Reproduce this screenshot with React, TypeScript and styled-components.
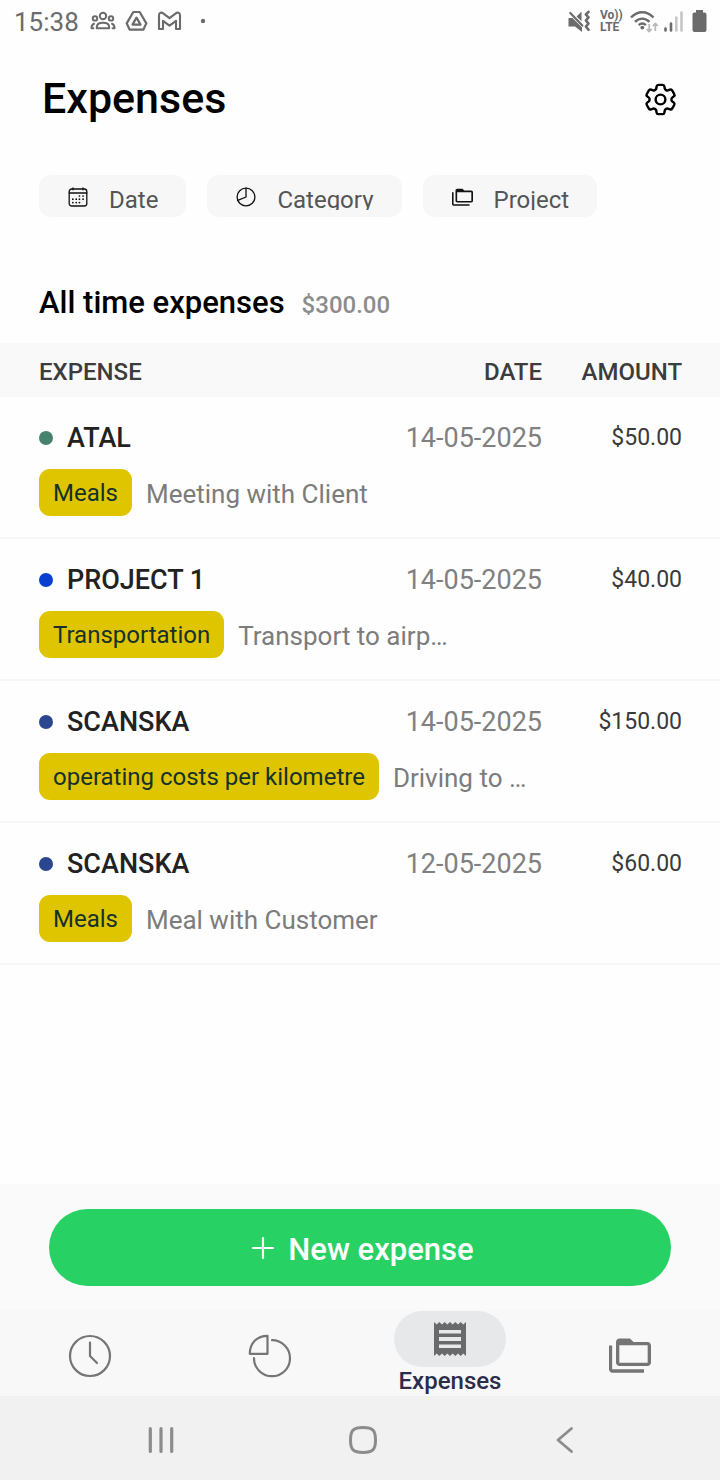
import React from "react";
import styled, { createGlobalStyle } from "styled-components";
import { HiOutlineCog6Tooth } from "react-icons/hi2";

const GlobalStyle = createGlobalStyle`
  *, *::before, *::after { box-sizing: border-box; }
  body {
    margin: 0;
    background: #fefefe;
    color: #000;
    font-family: Roboto, "Liberation Sans", sans-serif;
  }
  button { font: inherit; border: 0; cursor: pointer; }
  svg { display: block; flex: none; }
`;

const Screen = styled.div`
  display: flex;
  flex-direction: column;
  min-height: 100vh;
`;

const StatusBar = styled.div`
  display: flex;
  justify-content: space-between;
  align-items: center;
  height: 44px;
  padding: 0 13px 2px 14px;
  color: #6b6b6b;
`;

const StatusGroup = styled.div<{ $gap: number }>`
  display: flex;
  align-items: center;
  gap: ${(p) => p.$gap}px;
`;

const Clock = styled.time`
  padding: 2px 2px 0 0;
  font-size: 26px;
  line-height: 32px;
`;

const Volte = styled.span`
  display: flex;
  flex-direction: column;
  width: 21px;
  font-size: 12px;
  line-height: 12px;
  font-weight: 700;
  white-space: nowrap;
`;

const Header = styled.header`
  display: flex;
  justify-content: space-between;
  align-items: center;
  height: 110px;
  padding: 0 40px 0 42px;
`;

const Title = styled.h1`
  margin: 0;
  padding-bottom: 2px;
  font-size: 43px;
  line-height: 50px;
  font-weight: 500;
`;

const IconButton = styled.button`
  display: flex;
  padding: 0;
  background: none;
  color: inherit;
`;

const Filters = styled.div`
  display: flex;
  gap: 21px;
  padding: 21px 39px 0;
`;

const Chip = styled.button`
  display: flex;
  align-items: center;
  gap: 21px;
  height: 42px;
  padding: 2px 28px 0 29px;
  border-radius: 12px;
  background: #f7f7f7;
  color: #555;
`;

const ChipLabel = styled.span`
  height: 26px;
  overflow: hidden;
  font-size: 24px;
  line-height: 32px;
`;

const Summary = styled.div`
  display: flex;
  align-items: baseline;
  gap: 17px;
  padding: 66px 39px 20px;
`;

const SummaryTitle = styled.h2`
  margin: 0;
  font-size: 31px;
  line-height: 40px;
  font-weight: 500;
`;

const SummaryTotal = styled.span`
  font-size: 24px;
  font-weight: 500;
  color: #8c8c8c;
`;

const Table = styled.table`
  width: 100%;
  border-collapse: collapse;
  text-align: right;
`;

const HeadCell = styled.th<{ $align?: string }>`
  height: 54px;
  padding: 4px 0 0;
  background: #f9f9f9;
  color: #3c3c3c;
  font-size: 24px;
  line-height: 28px;
  font-weight: 500;
  text-align: ${(p) => p.$align ?? "right"};
  &:first-child { padding-left: 39px; }
  &:last-child { width: 178px; padding-right: 38px; }
`;

const Cell = styled.td`
  padding: 24px 0 0;
  line-height: 34px;
`;

const NameCell = styled(Cell)`
  padding-left: 39px;
  text-align: left;
`;

const Name = styled.span`
  display: flex;
  align-items: center;
  gap: 14px;
  font-size: 27px;
  font-weight: 500;
  color: #222;
`;

const Dot = styled.i<{ $color: string }>`
  width: 14px;
  height: 14px;
  border-radius: 50%;
  background: ${(p) => p.$color};
`;

const DateCell = styled(Cell)`
  font-size: 27px;
  color: #808080;
`;

const AmountCell = styled(Cell)`
  padding-right: 38px;
  font-size: 23px;
  color: #3a3a3a;
`;

const DetailCell = styled.td`
  padding: 14px 39px 21px;
  border-bottom: 2px solid #f7f7f7;
`;

const Detail = styled.div`
  display: flex;
  align-items: center;
  gap: 14px;
`;

const Tag = styled.span`
  padding: 2px 14px 0;
  border-radius: 11px;
  background: #dfc500;
  color: #16302b;
  font-size: 24px;
  line-height: 45px;
`;

const Note = styled.span`
  padding-top: 2px;
  font-size: 26px;
  line-height: 34px;
  color: #7c7c7c;
`;

const Main = styled.main`
  flex: 1;
`;

const ActionBar = styled.div`
  padding: 25px 49px 24px;
  background: #fafafa;
`;

const NewButton = styled.button`
  display: flex;
  align-items: center;
  justify-content: center;
  gap: 13px;
  width: 100%;
  height: 77px;
  padding: 0 0 0 5px;
  border-radius: 39px;
  background: #28d163;
  color: #fff;
  font-size: 31px;
  font-weight: 500;
`;

const NewLabel = styled.span`
  padding-top: 4px;
`;

const TabBar = styled.nav`
  display: grid;
  grid-template-columns: repeat(4, 1fr);
  height: 86px;
  background: #f8f8f8;
`;

const Tab = styled.a<{ $active?: boolean }>`
  display: flex;
  flex-direction: column;
  align-items: center;
  justify-content: ${(p) => (p.$active ? "flex-start" : "center")};
  padding-top: ${(p) => (p.$active ? 1 : 5)}px;
  color: ${(p) => (p.$active ? "#2b2d4a" : "#757575")};
  font-size: 24px;
  line-height: 28px;
  font-weight: 500;
  text-decoration: none;
`;

const Pill = styled.span`
  display: flex;
  align-items: center;
  justify-content: center;
  width: 112px;
  height: 56px;
  border-radius: 28px;
  background: #e7e8ea;
  color: #696a6c;
`;

const SystemBar = styled.div`
  display: flex;
  justify-content: space-around;
  align-items: center;
  height: 84px;
  padding: 4px 55px 0 60px;
  background: #f1f1f1;
  color: #8c8c8c;
`;

const line = {
  fill: "none",
  stroke: "currentColor",
  strokeLinecap: "round" as const,
  strokeLinejoin: "round" as const,
};

const PeopleIcon = () => (
  <svg width="26" height="20" viewBox="0 0 26 20" {...line} strokeWidth="2">
    <circle cx="13" cy="5" r="3.2" />
    <circle cx="5" cy="7.400" r="2.200" />
    <circle cx="21" cy="7.400" r="2.200" />
    <path d="M6.800 17.200v-1c0-2.800 2.600-4.400 6.200-4.400s6.200 1.600 6.200 4.400v1z" />
    <path d="M4 12.800C2.300 13.400 1.500 14.700 1.500 17.200H3.400M22 12.800c1.700.6 2.500 1.900 2.500 4.400h-1.900" />
  </svg>
);

const DriveIcon = () => (
  <svg width="23" height="22" viewBox="0 0 23 22" {...line} strokeWidth="2.200">
    <path d="M8.300 2h6.400l6.600 11.400-3 6.300H4.700l-3-6.300z" />
    <path d="M11.500 7.600l4 7H7.500z" />
  </svg>
);

const MailIcon = () => (
  <svg width="25" height="20" viewBox="0 0 25 20" {...line} strokeWidth="2.100">
    <path d="M2 4C2 1.600 4.500 1 6.200 2.300l6.300 4.900 6.300-4.900C20.500 1 23 1.600 23 4v14h-4V9.800l-6.500 4.800L6 9.800V18H2z" />
  </svg>
);

const MuteIcon = () => (
  <svg width="23" height="23" viewBox="0 0 23 23" {...line}>
    <path d="M.500 8h4l9.500 9.500V22L7 16.500H.500zM8.600 6.400l4.900-5v9.800z" fill="currentColor" stroke="none" />
    <path d="M2.300 3l12 12.600" strokeWidth="2.200" />
    <path d="M20.500 1.800l-2.600 2.700 2.600 2.900-2.600 3.100 2.600 3.100-2.600 2.900 2.600 3.200" strokeWidth="2.600" />
  </svg>
);

const WifiIcon = () => (
  <svg width="29" height="23" viewBox="0 0 29 23" {...line} strokeLinecap="butt">
    <path d="M1 7.500c6.500-7 16-7 22.500 0M5 11.800c4.300-4.300 10.200-4.300 14.500 0M8.700 15.200c2.200-2 5-2 7.200 0" strokeWidth="2.400" />
    <circle cx="12.300" cy="17.600" r="1.900" fill="currentColor" stroke="none" />
    <path d="M19.200 14v7.500M16.800 19l2.400 2.600 2.400-2.600M25.300 21v-7.500M22.900 16l2.400-2.600 2.400 2.600" stroke="#b9b9b9" strokeWidth="1.800" />
  </svg>
);

const SignalIcon = () => (
  <svg width="20" height="23" viewBox="0 0 20 23" {...line} strokeWidth="2.600">
    <path d="M2.500 18.500v2M8 13.500v7" />
    <path d="M13.300 7.500v13M18.500 2.500v18" stroke="#c6c6c6" />
  </svg>
);

const BatteryIcon = () => (
  <svg width="15" height="22" viewBox="0 0 15 22" fill="currentColor">
    <path d="M4 0h7v2.500h1.500Q14.500 2.500 14.500 4.500V20q0 2-2 2h-10q-2 0-2-2V4.500q0-2 2-2H4z" />
  </svg>
);

const CalendarIcon = () => (
  <svg width="20" height="20" viewBox="0 0 20 20" {...line} stroke="#111" strokeWidth="1.300">
    <rect x="1.200" y="2" width="17.600" height="17" rx="2.500" />
    <path d="M1.200 6h17.600M5 .8v2M15 .8v2" />
    <path d="M11.400 9h.1M15 9h.1M4.800 12.200h.1M8.200 12.200h.1M11.400 12.200h.1M15 12.200h.1M4.800 15.600h.1M8.200 15.600h.1M11.400 15.600h.1" strokeWidth="1.700" />
  </svg>
);

const CategoryIcon = () => (
  <svg width="20" height="20" viewBox="0 0 20 20" {...line} stroke="#111" strokeWidth="1.300">
    <circle cx="10" cy="10" r="8.900" />
    <path d="M10 1.100V10L1.800 13.400" />
  </svg>
);

const FoldersIcon = ({ size, color }: { size: number; color?: string }) => (
  <svg width={size} height={size} viewBox="0 0 24 24" fill={color ?? "currentColor"}>
    <path d="M1.800 6H0v13.500c0 1.100.9 2 2 2h18v-1.900H1.800zM22 4h-8l-2-2H6c-1.100 0-2 .9-2 2v11.700c0 1.100.9 2 2 2h16c1.100 0 2-.9 2-2V6c0-1.100-.9-2-2-2zm.1 11.900H5.900V5.900h16.200z" />
  </svg>
);

const PlusIcon = () => (
  <svg width="24" height="24" viewBox="0 0 24 24" {...line} strokeWidth="2.200">
    <path d="M12 2v20M2 12h20" />
  </svg>
);

const TimeTabIcon = () => (
  <svg width="44" height="44" viewBox="0 0 44 44" {...line} strokeWidth="2.200">
    <circle cx="22" cy="22" r="20" />
    <path d="M22 8.500V22l7 7" />
  </svg>
);

const StatsTabIcon = () => (
  <svg width="44" height="44" viewBox="0 0 44 44" {...line} strokeWidth="2.200">
    <path d="M19.500 1.800v18H1.800C1.800 9 9 1.800 19.500 1.800z" />
    <path d="M24 6.200A18 18 0 1 1 6 24.200" />
  </svg>
);

const ReceiptIcon = () => (
  <svg width="32" height="36" viewBox="0 0 32 36">
    <path
      fill="currentColor"
      fillRule="evenodd"
      d="M0 1l2.700 2.400L5.300 1 8 3.400 10.700 1l2.600 2.400L16 1l2.700 2.400L21.300 1 24 3.400 26.700 1l2.600 2.400L32 1v34l-2.700-2.400-2.600 2.400L24 32.600 21.300 35l-2.600-2.400L16 35l-2.700-2.400-2.600 2.400L8 32.600 5.300 35l-2.600-2.400L0 35zM5 9v3.500h22V9zM5 16v4h22v-4zM5 23.500V27h22v-3.500z"
    />
  </svg>
);

const RecentsIcon = () => (
  <svg width="28" height="28" viewBox="0 0 28 28" {...line} strokeWidth="3.200">
    <path d="M3.300 2.500v23M14 2.500v23M24.700 2.500v23" />
  </svg>
);

const HomeIcon = () => (
  <svg width="30" height="30" viewBox="0 0 30 30" {...line} strokeWidth="3">
    <path d="M15 2.500c9.800 0 12.500 2.700 12.500 12.500S24.800 27.500 15 27.500 2.500 24.800 2.500 15 5.200 2.500 15 2.500z" />
  </svg>
);

const BackIcon = () => (
  <svg width="28" height="28" viewBox="0 0 28 28" {...line} strokeWidth="2.800">
    <path d="M20.500 2.500L7 14l13.500 11.500" />
  </svg>
);

const filters = [
  { label: "Date", icon: <CalendarIcon /> },
  { label: "Category", icon: <CategoryIcon /> },
  { label: "Project", icon: <FoldersIcon size={21} color="#111" /> },
];

const expenses = [
  { name: "ATAL", color: "#45836f", date: "14-05-2025", amount: "$50.00", tag: "Meals", note: "Meeting with Client" },
  { name: "PROJECT 1", color: "#0b3fcf", date: "14-05-2025", amount: "$40.00", tag: "Transportation", note: "Transport to airp…" },
  { name: "SCANSKA", color: "#2b458f", date: "14-05-2025", amount: "$150.00", tag: "operating costs per kilometre", note: "Driving to …" },
  { name: "SCANSKA", color: "#2b458f", date: "12-05-2025", amount: "$60.00", tag: "Meals", note: "Meal with Customer" },
];

export default function App() {
  return (
    <Screen>
      <GlobalStyle />
      <StatusBar>
        <StatusGroup $gap={9}>
          <Clock>15:38</Clock>
          <PeopleIcon />
          <DriveIcon />
          <MailIcon />
          <svg width="24" height="6" viewBox="0 0 24 6" fill="currentColor">
            <circle cx="12" cy="3" r="2.200" />
          </svg>
        </StatusGroup>
        <StatusGroup $gap={4}>
          <StatusGroup $gap={9}>
            <MuteIcon />
            <Volte>
              <span>Vo))</span>
              <span>LTE</span>
            </Volte>
            <WifiIcon />
          </StatusGroup>
          <StatusGroup $gap={9}>
            <SignalIcon />
            <BatteryIcon />
          </StatusGroup>
        </StatusGroup>
      </StatusBar>

      <Header>
        <Title>Expenses</Title>
        <IconButton type="button" aria-label="Settings">
          <HiOutlineCog6Tooth size={39} />
        </IconButton>
      </Header>

      <Main>
        <Filters>
          {filters.map((f) => (
            <Chip type="button" key={f.label}>
              {f.icon}
              <ChipLabel>{f.label}</ChipLabel>
            </Chip>
          ))}
        </Filters>

        <Summary>
          <SummaryTitle>All time expenses</SummaryTitle>
          <SummaryTotal>$300.00</SummaryTotal>
        </Summary>

        <Table>
          <thead>
            <tr>
              <HeadCell scope="col" $align="left">EXPENSE</HeadCell>
              <HeadCell scope="col">DATE</HeadCell>
              <HeadCell scope="col">AMOUNT</HeadCell>
            </tr>
          </thead>
          {expenses.map((e, i) => (
            <tbody key={i}>
              <tr>
                <NameCell>
                  <Name>
                    <Dot $color={e.color} />
                    {e.name}
                  </Name>
                </NameCell>
                <DateCell>{e.date}</DateCell>
                <AmountCell>{e.amount}</AmountCell>
              </tr>
              <tr>
                <DetailCell colSpan={3}>
                  <Detail>
                    <Tag>{e.tag}</Tag>
                    <Note>{e.note}</Note>
                  </Detail>
                </DetailCell>
              </tr>
            </tbody>
          ))}
        </Table>
      </Main>

      <ActionBar>
        <NewButton type="button">
          <PlusIcon />
          <NewLabel>New expense</NewLabel>
        </NewButton>
      </ActionBar>

      <TabBar aria-label="Sections">
        <Tab href="#time" aria-label="Time">
          <TimeTabIcon />
        </Tab>
        <Tab href="#reports" aria-label="Reports">
          <StatsTabIcon />
        </Tab>
        <Tab href="#expenses" $active aria-current="page">
          <Pill>
            <ReceiptIcon />
          </Pill>
          Expenses
        </Tab>
        <Tab href="#projects" aria-label="Projects">
          <FoldersIcon size={42} />
        </Tab>
      </TabBar>

      <SystemBar>
        <IconButton type="button" aria-label="Recent apps">
          <RecentsIcon />
        </IconButton>
        <IconButton type="button" aria-label="Home">
          <HomeIcon />
        </IconButton>
        <IconButton type="button" aria-label="Back">
          <BackIcon />
        </IconButton>
      </SystemBar>
    </Screen>
  );
}
